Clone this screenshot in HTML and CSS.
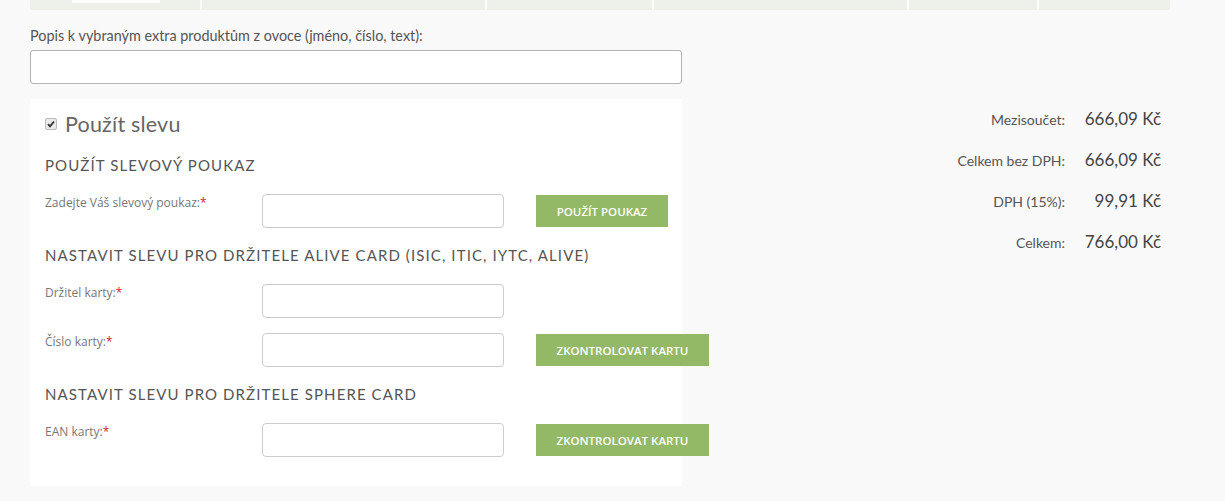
FILE: index.html
```html
<!DOCTYPE html>
<html lang="cs">
<head>
<meta charset="utf-8">
<title>Sleva</title>
<link rel="stylesheet" href="styles.css">
</head>
<body>
<div class="topbar">
  <div class="cell c1"><span class="stub"></span></div>
  <div class="cell c2"></div>
  <div class="cell c3"></div>
  <div class="cell c4"></div>
  <div class="cell c5"></div>
  <div class="cell c6"></div>
</div>
<div class="page">
  <label class="desc-label">Popis k vybraným extra produktům z ovoce (jméno, číslo, text):</label>
  <input class="desc-input" type="text">
  <div class="main">
    <div class="panel">
      <div class="use-discount">
        <span class="checkbox"><svg width="8" height="8" viewBox="0 0 8 8"><path d="M1 4.2 L3 6.3 L7 1.5" fill="none" stroke="#333" stroke-width="1.8"/></svg></span>
        <span class="use-title">Použít slevu</span>
      </div>
      <h3 class="sec-title first">Použít slevový poukaz</h3>
      <div class="row">
        <span class="lbl">Zadejte Váš slevový poukaz:<em>*</em></span>
        <input class="field" type="text">
        <button class="btn">Použít poukaz</button>
      </div>
      <h3 class="sec-title">Nastavit slevu pro držitele ALIVE card (ISIC, ITIC, IYTC, ALIVE)</h3>
      <div class="row">
        <span class="lbl">Držitel karty:<em>*</em></span>
        <input class="field" type="text">
      </div>
      <div class="row">
        <span class="lbl">Číslo karty:<em>*</em></span>
        <input class="field" type="text">
        <button class="btn wide">Zkontrolovat kartu</button>
      </div>
      <h3 class="sec-title">Nastavit slevu pro držitele SPHERE card</h3>
      <div class="row">
        <span class="lbl">EAN karty:<em>*</em></span>
        <input class="field" type="text">
        <button class="btn wide">Zkontrolovat kartu</button>
      </div>
    </div>
    <div class="summary">
      <div class="sum-row"><span class="sum-lbl">Mezisoučet:</span><span class="sum-val">666,09 Kč</span></div>
      <div class="sum-row"><span class="sum-lbl">Celkem bez DPH:</span><span class="sum-val">666,09 Kč</span></div>
      <div class="sum-row"><span class="sum-lbl">DPH (15%):</span><span class="sum-val">99,91 Kč</span></div>
      <div class="sum-row"><span class="sum-lbl">Celkem:</span><span class="sum-val">766,00 Kč</span></div>
    </div>
  </div>
</div>
</body>
</html>
```

FILE: styles.css
```css
html, body {
  margin: 0;
  padding: 0;
}
body {
  background: #f9f9f9;
  width: 1225px;
  height: 501px;
  overflow: hidden;
  font-family: "Open Sans", "Liberation Sans", sans-serif;
  color: #555;
}
.topbar {
  display: flex;
  gap: 2px;
  margin-left: 30px;
  width: 1140px;
  height: 10px;
  background: #fcfcfb;
}
.cell {
  background: #eef0ea;
  height: 10px;
  position: relative;
}
.c1 { width: 170px; }
.c2 { width: 283px; }
.c3 { width: 165px; }
.c4 { width: 253px; }
.c5 { width: 128px; }
.c6 { flex: 1; }
.stub {
  position: absolute;
  left: 42px;
  top: 0;
  width: 88px;
  height: 3px;
  background: #fff;
}
.page {
  padding-left: 30px;
}
.desc-label {
  display: block;
  margin-top: 17px;
  font-family: "Lato", sans-serif;
  font-size: 14.4px;
  line-height: 18px;
  color: #555;
}
.desc-input {
  display: block;
  box-sizing: border-box;
  margin-top: 5px;
  width: 652px;
  height: 34px;
  border: 1px solid #b3b3b3;
  border-radius: 3px;
  background: #fff;
}
.main {
  display: flex;
  margin-top: 15px;
}
.panel {
  width: 652px;
  height: 387px;
  flex-shrink: 0;
  box-sizing: border-box;
  background: #fff;
  padding: 12px 15px 0 15px;
}
.use-discount {
  display: flex;
  align-items: center;
  gap: 8px;
  height: 26px;
}
.checkbox {
  width: 10px;
  height: 10px;
  border: 1px solid #bbb;
  border-radius: 2px;
  background: #e9e9e9;
  display: flex;
  align-items: center;
  justify-content: center;
}
.use-title {
  font-family: "Lato", sans-serif;
  font-size: 21.5px;
  color: #666;
  letter-spacing: 0.2px;
}
.sec-title {
  margin: 18px 0 0 0;
  font-family: "Lato", sans-serif;
  font-weight: 400;
  font-size: 15px;
  line-height: 18px;
  letter-spacing: 1.1px;
  text-transform: uppercase;
  color: #555;
}
.sec-title.first { margin-top: 19px; }
.row {
  display: flex;
  align-items: flex-start;
  margin-top: 17px;
}
.sec-title + .row { margin-top: 20px; }
.row + .row { margin-top: 15px; }
.lbl {
  width: 217px;
  flex-shrink: 0;
  font-size: 12px;
  line-height: 16px;
  padding-top: 1px;
  color: #777;
}
.lbl em {
  font-style: normal;
  color: #cc1f1f;
}
.field {
  flex-shrink: 0;
  box-sizing: border-box;
  width: 242px;
  height: 34px;
  border: 1px solid #ccc;
  border-radius: 4px;
  background: #fff;
  margin: 0;
}
.btn {
  flex-shrink: 0;
  margin: 1px 0 0 32px;
  height: 32px;
  width: 132px;
  border: 0;
  background: #94b966;
  color: #fff;
  font-family: "Open Sans", sans-serif;
  font-weight: 600;
  font-size: 11.5px;
  text-transform: uppercase;
  padding: 0;
}
.btn.wide { width: 173px; }
.summary {
  flex: 1;
  padding-top: 9px;
  display: flex;
  flex-direction: column;
  gap: 21px;
  padding-right: 64px;
}
.sum-row {
  display: flex;
  justify-content: flex-end;
  align-items: baseline;
  height: 20px;
}
.sum-lbl {
  font-family: "Lato", sans-serif;
  font-size: 14px;
  color: #555;
}
.sum-val {
  width: 96px;
  text-align: right;
  font-family: "Lato", sans-serif;
  font-size: 17px;
  color: #444;
}
```
